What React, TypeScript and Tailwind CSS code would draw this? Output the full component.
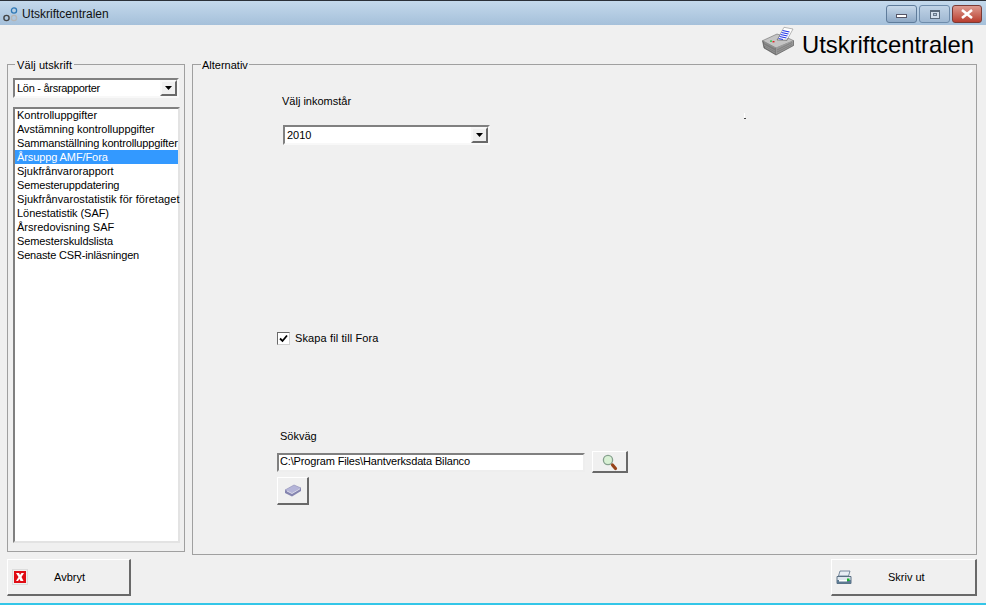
import React from "react";

const items = [
  { t: "Kontrolluppgifter", c: "" },
  { t: "Avstämning kontrolluppgifter", c: "tracking-[-0.03px]" },
  { t: "Sammanställning kontrolluppgifter", c: "tracking-[-0.15px]" },
  { t: "Årsuppg AMF/Fora", c: "bg-[#3399ff] text-white tracking-[-0.1px]" },
  { t: "Sjukfrånvarorapport", c: "" },
  { t: "Semesteruppdatering", c: "tracking-[-0.15px]" },
  { t: "Sjukfrånvarostatistik för företaget", c: "tracking-[0.05px]" },
  { t: "Lönestatistik (SAF)", c: "tracking-[-0.05px]" },
  { t: "Årsredovisning SAF", c: "" },
  { t: "Semesterskuldslista", c: "tracking-[-0.1px]" },
  { t: "Senaste CSR-inläsningen", c: "tracking-[-0.17px]" },
];

function Arrow() {
  return (
    <div className="w-[17px] h-[16px] bg-[#f0f0f0] border-2 border-t-[#f8f8f8] border-l-[#f8f8f8] border-r-[#696969] border-b-[#696969] flex items-center justify-center">
      <svg width="8" height="5" viewBox="0 0 8 5">
        <path d="M0 0H7L3.5 4Z" fill="#000" />
      </svg>
    </div>
  );
}

function Combo({ text, w, track }: { text: string; w: string; track?: string }) {
  return (
    <div className={`${w} h-[20px] bg-white border-2 border-t-[#808080] border-l-[#808080] border-b-[#f8f8f8] border-r-[#f8f8f8] flex items-center justify-between`}>
      <span className={`pl-[2px] leading-none ${track ?? ""}`}>{text}</span>
      <Arrow />
    </div>
  );
}

function AppIcon() {
  return (
    <svg width="20" height="20" viewBox="0 0 20 20" fill="none">
      <circle cx="12" cy="6.5" r="2.6" stroke="#2f79b5" strokeWidth="1.3" />
      <circle cx="4.5" cy="14" r="2.6" stroke="#444" strokeWidth="1.4" />
      <circle cx="12" cy="14" r="2.6" stroke="#b5b5b5" strokeWidth="1.4" />
    </svg>
  );
}

function PrinterLarge() {
  return (
    <svg width="32" height="30" viewBox="0 0 32 30" className="-mt-[8px]">
      <path d="M15 14L22 1.3L31 3L25 14Z" fill="#fff" stroke="#8a8a8a" strokeWidth="0.6" />
      <path d="M20.5 4.5L27.5 6M19.5 6.5L26.5 8M18.5 8.5L25.5 10M17.5 10.5L24.5 12M16.5 12.5L21 13.5" stroke="#2436e8" strokeWidth="1.2" />
      <path d="M0.5 14.7L15 8L18 9L15 14L25 14.5L26 12L31.6 14.7L14 22Z" fill="#c4c4c4" stroke="#555" strokeWidth="0.5" />
      <path d="M0.5 14.7L14 22V29L2 22Z" fill="#7c7c7c" />
      <path d="M14 22L31.6 14.7V19.5L14 29Z" fill="#989898" />
      <path d="M2 16.5L13 22M2 19L13 25M3 21L13 27" stroke="#9e9e9e" strokeWidth="0.6" />
      <path d="M15 24L30 16.5M15 26L30 18.5" stroke="#6a6a6a" strokeWidth="0.5" />
      <path d="M0.5 14.7L2 22L14 29L31.6 19.5V14.7" fill="none" stroke="#444" strokeWidth="0.6" />
      <rect x="8" y="14.5" width="2" height="1.2" fill="#19c43a" />
      <rect x="10.5" y="15" width="2" height="1.4" fill="#e02424" />
    </svg>
  );
}

function Magnifier() {
  return (
    <svg width="16" height="17" viewBox="0 0 16 17" className="mt-[2px]">
      <circle cx="6" cy="6" r="4.6" fill="#d8f0d4" stroke="#86a08e" strokeWidth="1.3" />
      <path d="M10.5 11L13.5 14.5" stroke="#96431a" strokeWidth="3.2" strokeLinecap="round" />
    </svg>
  );
}

function Book() {
  return (
    <svg width="18" height="13" viewBox="0 0 18 13">
      <path d="M1 6L10 1L17 4L8 9.5Z" fill="#b4b4d8" stroke="#8c8cb4" strokeWidth="0.6" />
      <path d="M1 6L8 9.5L17 4V7L8 12.5L1 9Z" fill="#8585b0" />
      <path d="M3 7L8 9.5L16 4.8" stroke="#ececf6" strokeWidth="0.8" fill="none" />
    </svg>
  );
}

function RedX() {
  return (
    <div className="w-[16px] h-[16px] border border-[#dcdcdc] p-px">
      <div className="w-full h-full bg-[#e00c14] flex items-center justify-center">
        <svg width="10" height="10" viewBox="0 0 10 10">
          <path d="M1 1H4L5 3L6.5 1H9L6.5 5L8.5 9H5.5L4.5 7L3 9H1L3.5 5Z" fill="#fff" />
        </svg>
      </div>
    </div>
  );
}

function PrinterSmall() {
  return (
    <svg width="16" height="15" viewBox="0 0 16 15">
      <path d="M4 1H14L12.5 6H2.5Z" fill="#e8eef4" stroke="#5a7088" strokeWidth="0.8" />
      <path d="M1 6.5H15V13.5H1Z" fill="#dfe7ee" stroke="#4c6378" strokeWidth="0.9" />
      <rect x="1" y="10" width="14" height="3.5" fill="#5d7a92" />
      <rect x="3" y="10" width="8" height="1.5" fill="#fff" />
      <rect x="11" y="8.5" width="2.5" height="2.5" fill="#18b52c" />
    </svg>
  );
}

const raised = "bg-[#f0f0f0] border-t border-l border-t-white border-l-white border-r-2 border-b-2 border-r-[#696969] border-b-[#696969]";

export default function App() {
  return (
    <div className="w-[986px] h-[605px] overflow-hidden flex flex-col bg-[#f0f0f0] text-[11px] text-black font-['Liberation_Sans',Arial,sans-serif]">
      <div className="h-[25px] shrink-0 border-t border-t-[#2a3038] bg-gradient-to-b from-[#c4d9ec] to-[#a5c0da] flex items-center justify-between pl-[2px] pr-[4px]">
        <div className="flex items-center mt-[1px]">
          <AppIcon />
          <span className="text-[12px] text-[#111]">Utskriftcentralen</span>
        </div>
        <div className="flex items-start gap-[2px] self-start mt-[4px]">
          <div className="w-[31px] h-[18px] rounded-[3px] border border-[#5f7c9b] bg-gradient-to-b from-[#c8d9ea] to-[#8ea9c6] flex items-center justify-center">
            <div className="w-[11px] h-[4px] mt-[4px] bg-white border border-[#556]" />
          </div>
          <div className="w-[31px] h-[18px] rounded-[3px] border border-[#6f8cab] bg-gradient-to-b from-[#c0d3e6] to-[#9fb8d2] flex items-center justify-center">
            <div className="w-[10px] h-[9px] border border-[#59697a] border-t-2 bg-[#d4e0ec] flex items-center justify-center">
              <div className="w-[4px] h-[3px] bg-[#b4c8dc] border border-[#6b7b8c]" />
            </div>
          </div>
          <div className="w-[30px] h-[18px] rounded-[3px] border border-[#7a3a34] bg-gradient-to-b from-[#dd9a90] to-[#b83c2e] flex items-center justify-center">
            <svg width="12" height="10" viewBox="0 0 12 10">
              <path d="M1 1L11 9M11 1L1 9" stroke="#fff" strokeWidth="2.6" />
            </svg>
          </div>
        </div>
      </div>

      <div className="h-[33px] shrink-0 flex items-center justify-end gap-[8px] pr-[12px] pt-[7px]">
        <PrinterLarge />
        <span className="text-[23.8px] leading-none">Utskriftcentralen</span>
      </div>

      <div className="flex gap-[7px] pl-[7px] pr-[9px] h-[501px] shrink-0 items-start">
        <fieldset className="w-[178px] h-[494px] border border-[#a0a0a0] pl-[5px] pr-[4px]">
          <legend className="ml-[2px] px-[2px] text-[11px] tracking-[0.1px] leading-[13px]">
            <span className="block translate-y-[1px]">Välj utskrift</span>
          </legend>
          <div className="mt-[7px]">
            <Combo text="Lön - årsrapporter" w="w-[166px]" track="tracking-[-0.28px]" />
          </div>
          <div className="mt-[9px] w-[167px] h-[436px] bg-white border-2 border-t-[#808080] border-l-[#808080] border-b-[#e3e3e3] border-r-[#e3e3e3]">
            <div className="-mt-px">
              {items.map((i) => (
                <div
                  key={i.t}
                  className={`h-[14px] leading-[14px] pl-[2px] whitespace-nowrap ${i.c}`}
                >
                  {i.t}
                </div>
              ))}
            </div>
          </div>
        </fieldset>

        <fieldset className="w-[785px] h-[497px] border border-[#a0a0a0]">
          <legend className="ml-[8px] px-[1px] text-[11px] leading-[13px]">
            <span className="block translate-y-[1px]">Alternativ</span>
          </legend>
          <div className="pl-[84px] relative">
            <div className="absolute left-[551px] top-[18px] w-px h-[5px] bg-white" />
            <div className="absolute left-[551px] top-[23px] w-[2px] h-px bg-[#444]" />
            <div className="leading-[13px] mt-[24px] ml-[5px]">Välj inkomstår</div>
            <div className="mt-[17px] ml-[6px]">
              <Combo text="2010" w="w-[207px]" />
            </div>
            <label className="mt-[187px] flex items-center gap-[5px]">
              <span className="w-[13px] h-[13px] bg-white border border-t-[#696969] border-l-[#696969] border-b-[#d0d0d0] border-r-[#d0d0d0] flex items-center justify-center">
                <svg width="9" height="9" viewBox="0 0 9 9">
                  <path d="M1 4.5L3.5 7L8 1.5" stroke="#000" strokeWidth="1.8" fill="none" />
                </svg>
              </span>
              <span className="tracking-[0.12px] leading-[13px]">Skapa fil till Fora</span>
            </label>
            <div className="mt-[85px] ml-[3px] leading-[13px]">Sökväg</div>
            <div className="mt-[8px] flex items-center gap-[7px]">
              <div className="w-[308px] h-[19px] bg-white border-2 border-t-[#808080] border-l-[#808080] border-b-[#eeeeee] border-r-[#eeeeee] flex items-center pl-[1px] pb-[1px] tracking-[-0.15px]">
                C:\Program Files\Hantverksdata Bilanco
              </div>
              <div className={`${raised} w-[36px] h-[22px] flex items-center justify-center`}>
                <Magnifier />
              </div>
            </div>
            <div className={`${raised} mt-[4px] w-[32px] h-[28px] flex items-center justify-center`}>
              <Book />
            </div>
          </div>
        </fieldset>
      </div>

      <div className="flex justify-between pl-[7px] pr-[9px] h-[37px] shrink-0">
        <div className={`${raised} w-[124px] h-[37px] flex items-center pl-[4px]`}>
          <RedX />
          <span className="ml-[26px]">Avbryt</span>
        </div>
        <div className={`${raised} w-[146px] h-[37px] flex items-center pl-[4px]`}>
          <PrinterSmall />
          <span className="ml-[36px]">Skriv ut</span>
        </div>
      </div>

      <div className="flex-1" />
      <div className="h-[2px] shrink-0 bg-[#34c6e8]" />
    </div>
  );
}
